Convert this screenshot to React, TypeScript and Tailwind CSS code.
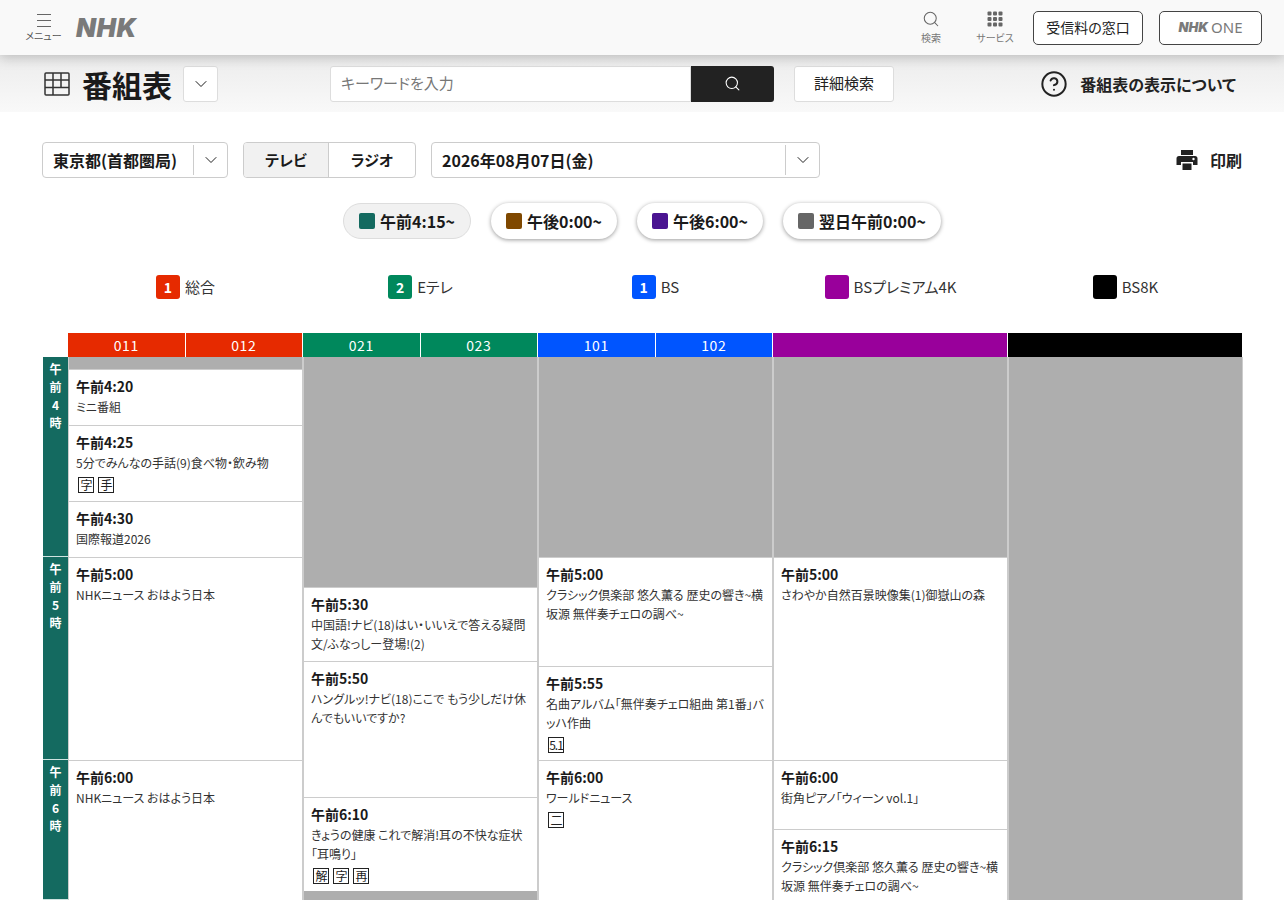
import { ChevronDown, CircleHelp, Search } from "lucide-react"

type Program = {
  height: number
  time?: string
  title?: string
  badges?: string[]
}

const columns: Program[][] = [
  [
    { height: 12 },
    { height: 56, time: "午前4:20", title: "ミニ番組" },
    { height: 76, time: "午前4:25", title: "5分でみんなの手話(9)食べ物・飲み物", badges: ["字", "手"] },
    { height: 56, time: "午前4:30", title: "国際報道2026" },
    { height: 203, time: "午前5:00", title: "NHKニュース おはよう日本" },
    { height: 140, time: "午前6:00", title: "NHKニュース おはよう日本" },
  ],
  [
    { height: 230 },
    { height: 74, time: "午前5:30", title: "中国語!ナビ(18)はい・いいえで答える疑問文/ふなっしー登場!(2)" },
    { height: 136, time: "午前5:50", title: "ハングルッ!ナビ(18)ここで もう少しだけ休んでもいいですか?" },
    { height: 94, time: "午前6:10", title: "きょうの健康 これで解消!耳の不快な症状「耳鳴り」", badges: ["解", "字", "再"] },
    { height: 9 },
  ],
  [
    { height: 200 },
    { height: 109, time: "午前5:00", title: "クラシック倶楽部 悠久薫る 歴史の響き~横坂源 無伴奏チェロの調べ~" },
    { height: 94, time: "午前5:55", title: "名曲アルバム「無伴奏チェロ組曲 第1番」バッハ作曲", badges: ["5.1"] },
    { height: 140, time: "午前6:00", title: "ワールドニュース", badges: ["二"] },
  ],
  [
    { height: 200 },
    { height: 203, time: "午前5:00", title: "さわやか自然百景映像集(1)御嶽山の森" },
    { height: 69, time: "午前6:00", title: "街角ピアノ「ウィーン vol.1」" },
    { height: 71, time: "午前6:15", title: "クラシック倶楽部 悠久薫る 歴史の響き~横坂源 無伴奏チェロの調べ~", badges: ["解", "字", "再"] },
  ],
  [{ height: 543 }],
]

const channels = [
  { mark: "1", label: "総合", color: "bg-[#e62a00]" },
  { mark: "2", label: "Eテレ", color: "bg-[#00885c]" },
  { mark: "1", label: "BS", color: "bg-[#0055ff]" },
  { mark: "", label: "BSプレミアム4K", color: "bg-[#99009b]" },
  { mark: "", label: "BS8K", color: "bg-black" },
]

const pills = [
  { label: "午前4:15~", color: "bg-[#146a60]", active: true },
  { label: "午後0:00~", color: "bg-[#7f4800]", active: false },
  { label: "午後6:00~", color: "bg-[#4a1491]", active: false },
  { label: "翌日午前0:00~", color: "bg-[#666666]", active: false },
]

function NhkMark({ className }: { className: string }) {
  return <span className={`font-['Inter'] font-black italic text-[#7a7a7a] ${className}`}>NHK</span>
}

function ProgramCell({ program }: { program: Program }) {
  if (!program.time) {
    return <div className="shrink-0 bg-[#aeaeae]" style={{ height: program.height }} />
  }
  return (
    <div className="shrink-0 overflow-hidden border-t border-[#cccccc] bg-white px-[7px] pt-[6px]" style={{ height: program.height }}>
      <div className="text-[14px] leading-[21px] font-bold text-[#1a1a1a]">{program.time}</div>
      <div className="text-[12px] leading-[19px] text-[#333333]">{program.title}</div>
      {program.badges && (
        <div className="mt-[5px] flex gap-[4px] pl-[2px]">
          {program.badges.map((badge) => (
            <span key={badge} className="flex h-[16px] w-[16px] items-center justify-center border border-[#222222] text-[12px] leading-none tracking-[-1px] text-[#222222]">
              {badge}
            </span>
          ))}
        </div>
      )}
    </div>
  )
}

function HourCell({ hour, height }: { hour: string; height: number }) {
  return (
    <div className="flex shrink-0 flex-col items-center border-b border-[#cfe3e0] bg-[#146a60] pt-[3px] text-[12px] leading-[18px] font-bold text-white" style={{ height }}>
      <span>午</span>
      <span>前</span>
      <span>{hour}</span>
      <span>時</span>
    </div>
  )
}

function SelectArrow() {
  return (
    <div className="flex h-[30px] w-[34px] items-center justify-center border-l border-[#cccccc]">
      <ChevronDown size={20} strokeWidth={1.2} className="text-[#222222]" />
    </div>
  )
}

export default function App() {
  return (
    <div className="h-[900px] overflow-hidden bg-white font-['Noto_Sans_CJK_JP','Noto_Sans',sans-serif] [font-feature-settings:'palt'] text-[#1a1a1a]">
      <header className="relative z-10 flex h-[55px] items-center bg-[#f9f9f9] pr-[22px] pl-[24px] shadow-[0_2px_12px_rgba(0,0,0,0.22)]">
        <div className="flex w-[39px] flex-col items-center pt-[2px]">
          <svg width="16" height="15" viewBox="0 0 16 15" className="text-[#666666]">
            <path d="M1 1.5h14M1 7.5h14M1 13.5h14" stroke="currentColor" strokeWidth="1.2" />
          </svg>
          <span className="text-[10px] leading-[16px] whitespace-nowrap text-[#555555]">メニュー</span>
        </div>
        <NhkMark className="ml-[13px] text-[26px] leading-none tracking-[0.5px]" />
        <div className="ml-auto flex w-[36px] flex-col items-center">
          <Search size={18} strokeWidth={1.4} className="text-[#666666]" />
          <span className="mt-[3px] text-[10px] leading-[14px] text-[#777777]">検索</span>
        </div>
        <div className="ml-[25px] flex w-[42px] flex-col items-center">
          <svg width="16" height="16" viewBox="0 0 16 16" className="text-[#666666]">
            <g fill="currentColor">
              <rect x="0.5" y="0.5" width="4" height="4" rx="1" />
              <rect x="6" y="0.5" width="4" height="4" rx="1" />
              <rect x="11.5" y="0.5" width="4" height="4" rx="1" />
              <rect x="0.5" y="6" width="4" height="4" rx="1" />
              <rect x="6" y="6" width="4" height="4" rx="1" />
              <rect x="11.5" y="6" width="4" height="4" rx="1" />
              <rect x="0.5" y="11.5" width="4" height="4" rx="1" />
              <rect x="6" y="11.5" width="4" height="4" rx="1" />
              <rect x="11.5" y="11.5" width="4" height="4" rx="1" />
            </g>
          </svg>
          <span className="mt-[4px] text-[10px] leading-[14px] whitespace-nowrap text-[#777777]">サービス</span>
        </div>
        <button className="ml-[17px] flex h-[34px] w-[110px] items-center justify-center rounded-[5px] border border-[#444444] bg-white text-[14px] text-[#222222]">
          受信料の窓口
        </button>
        <button className="ml-[16px] flex h-[34px] w-[103px] items-center justify-center gap-[3px] rounded-[5px] border border-[#444444] bg-white">
          <NhkMark className="text-[13px] leading-none" />
          <span className="font-['Noto_Sans'] text-[15px] leading-none text-[#7a7a7a]">ONE</span>
        </button>
      </header>

      <section className="flex h-[57px] items-center bg-gradient-to-b from-[#ececec] to-[#f9f9f9] pr-[48px] pl-[44px]">
        <svg width="26" height="24" viewBox="0 0 26 24" className="text-[#333333]">
          <g fill="none" stroke="currentColor" strokeWidth="1.5">
            <rect x="1" y="1" width="24" height="22" rx="1" />
            <path d="M1 8h24M1 15.5h24M9 1v22M17 1v14.500" />
          </g>
        </svg>
        <h1 className="ml-[12px] text-[30px] leading-none font-bold text-[#1a1a1a]">番組表</h1>
        <div className="ml-[11px] flex h-[36px] w-[35px] items-center justify-center rounded-[3px] border border-[#dddddd] bg-white">
          <ChevronDown size={20} strokeWidth={1.2} />
        </div>
        <div className="ml-[112px] flex h-[36px] w-[444px]">
          <div className="flex flex-1 items-center rounded-l-[3px] border border-[#dddddd] bg-white pl-[10px] text-[15px] text-[#777777]">
            キーワードを入力
          </div>
          <div className="flex w-[83px] items-center justify-center rounded-r-[3px] bg-[#222222]">
            <Search size={17} strokeWidth={1.5} className="text-white" />
          </div>
        </div>
        <button className="ml-[20px] flex h-[36px] w-[100px] items-center justify-center rounded-[3px] border border-[#dddddd] bg-white text-[15px] text-[#222222]">
          詳細検索
        </button>
        <CircleHelp size={28} strokeWidth={1.7} className="ml-auto text-[#222222]" />
        <span className="ml-[12px] text-[16px] font-bold text-[#222222]">番組表の表示について</span>
      </section>

      <section className="mt-[30px] flex h-[36px] items-center pr-[42px] pl-[42px]">
        <div className="flex h-[36px] w-[186px] items-center rounded-[4px] border border-[#cccccc]">
          <span className="flex-1 pl-[10px] text-[16px] font-bold whitespace-nowrap">東京都(首都圏局)</span>
          <SelectArrow />
        </div>
        <div className="ml-[15px] flex h-[36px] w-[173px] overflow-hidden rounded-[4px] border border-[#cccccc] text-[15px] font-bold">
          <div className="flex w-[85px] items-center justify-center border-r border-[#cccccc] bg-[#f1f1f1]">テレビ</div>
          <div className="flex flex-1 items-center justify-center">ラジオ</div>
        </div>
        <div className="ml-[15px] flex h-[36px] w-[389px] items-center rounded-[4px] border border-[#cccccc]">
          <span className="flex-1 pl-[10px] text-[16px] font-bold">2026年08月07日(金)</span>
          <SelectArrow />
        </div>
        <svg width="22" height="22" viewBox="0 0 22 22" className="ml-auto text-[#222222]">
          <path fill="currentColor" d="M5 1h12v5H5zM3 7h16a2.500 2.500 0 0 1 2.500 2.500V16H17v-3H5v3H.5V9.500A2.500 2.500 0 0 1 3 7zM6.500 14.500h9V21h-9z" />
          <circle cx="17.500" cy="10" r="1.200" fill="white" />
        </svg>
        <span className="ml-[12px] text-[16px] font-bold text-[#222222]">印刷</span>
      </section>

      <nav className="mt-[25px] flex h-[36px] justify-center gap-[20px]">
        {pills.map((pill) => (
          <div
            key={pill.label}
            className={`flex h-[36px] items-center gap-[5px] rounded-full px-[15px] text-[16px] font-bold whitespace-nowrap ${
              pill.active
                ? "border border-[#dddddd] bg-[#f1f1f1]"
                : "bg-white shadow-[0_1px_4px_rgba(0,0,0,0.4)]"
            }`}
          >
            <span className={`h-[16px] w-[16px] rounded-[2px] ${pill.color}`} />
            {pill.label}
          </div>
        ))}
      </nav>

      <div className="mt-[36px] grid h-[24px] grid-cols-[repeat(5,235px)] pl-[68px]">
        {channels.map((channel) => (
          <div key={channel.label} className="flex items-center justify-center gap-[5px] text-[15px] text-[#333333]">
            <span className={`flex h-[24px] w-[24px] items-center justify-center rounded-[3px] text-[14px] font-bold text-white ${channel.color}`}>
              {channel.mark}
            </span>
            {channel.label}
          </div>
        ))}
      </div>

      <div className="mt-[34px] grid h-[24px] grid-cols-[repeat(5,234px)] gap-x-px pl-[68px] text-[14px] leading-[24px] tracking-[0.6px] text-white">
        <div className="grid grid-cols-2 gap-x-px bg-white text-center">
          <div className="bg-[#e62a00]">011</div>
          <div className="bg-[#e62a00]">012</div>
        </div>
        <div className="grid grid-cols-2 gap-x-px bg-white text-center">
          <div className="bg-[#00885c]">021</div>
          <div className="bg-[#00885c]">023</div>
        </div>
        <div className="grid grid-cols-2 gap-x-px bg-white text-center">
          <div className="bg-[#0055ff]">101</div>
          <div className="bg-[#0055ff]">102</div>
        </div>
        <div className="bg-[#99009b]" />
        <div className="bg-black" />
      </div>

      <div className="flex h-[543px] pl-[43px]">
        <div className="flex w-[25px] shrink-0 flex-col">
          <HourCell hour="4" height={200} />
          <HourCell hour="5" height={203} />
          <HourCell hour="6" height={140} />
        </div>
        {columns.map((column, index) => (
          <div key={index} className="flex w-[235px] shrink-0 flex-col border-x border-[#cccccc] bg-[#aeaeae]">
            {column.map((program, row) => (
              <ProgramCell key={row} program={program} />
            ))}
          </div>
        ))}
      </div>
    </div>
  )
}
